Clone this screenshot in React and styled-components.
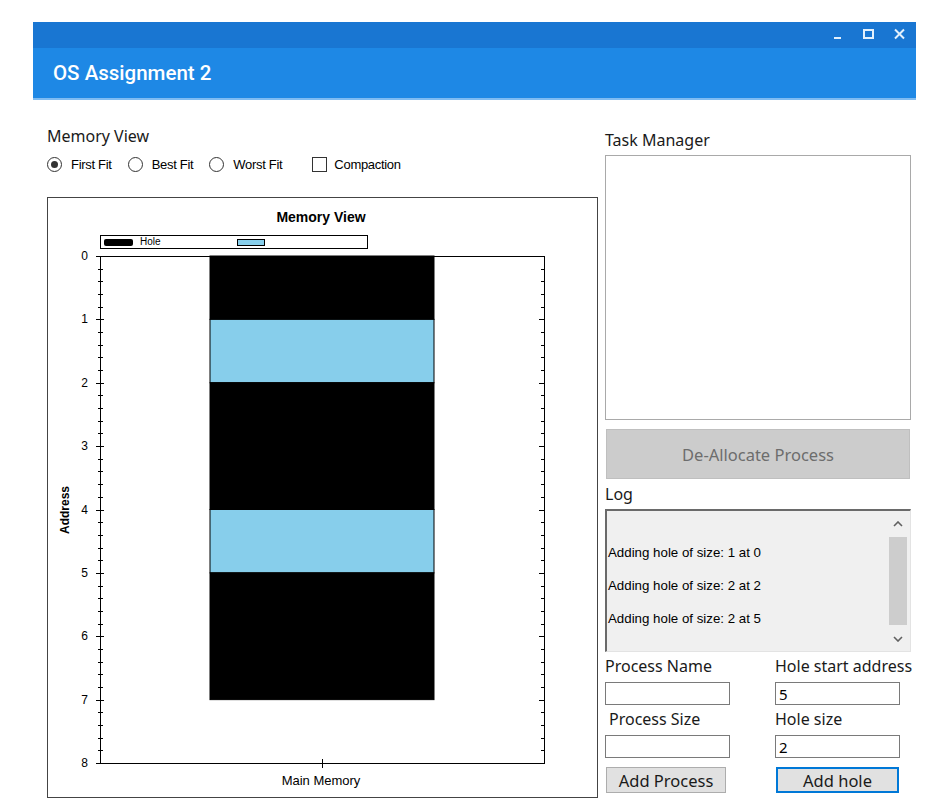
import React from 'react'
import styled, { createGlobalStyle } from 'styled-components'

const Global = createGlobalStyle`
  html, body {
    margin: 0;
    padding: 0;
    background: #ffffff;
  }
  * { box-sizing: border-box; }
`

const UI = '"Noto Sans", "Open Sans", sans-serif'
const CLASSIC = '"Liberation Sans", Arial, sans-serif'

// chart geometry (inside svg, origin at page 48,198)
const PL = 52
const PR = 496
const PT = 58
const PB = 565
const UNIT = (PB - PT) / 8
const BAR_X = 162
const BAR_W = 224

const segments = [
  { from: 0, to: 1, kind: 'process' },
  { from: 1, to: 2, kind: 'hole' },
  { from: 2, to: 4, kind: 'process' },
  { from: 4, to: 5, kind: 'hole' },
  { from: 5, to: 7, kind: 'process' },
]

const logLines = [
  'Adding hole of size: 1 at 0',
  'Adding hole of size: 2 at 2',
  'Adding hole of size: 2 at 5',
]

const App = () => {
  return (
    <>
      <Global />
      <Window>
        <TitleBar>
          <Controls>
            <svg width="72" height="16" viewBox="0 0 72 16">
              <rect x="0" y="10" width="7" height="2" fill="#e3f0fc" />
              <rect x="30" y="3" width="9" height="8" fill="none" stroke="#e3f0fc" strokeWidth="2" />
              <path d="M61 2.5 L70 11.5 M70 2.5 L61 11.5" stroke="#e3f0fc" strokeWidth="2" />
            </svg>
          </Controls>
          <TitleBand>OS Assignment 2</TitleBand>
        </TitleBar>

        <Body>
          <LeftColumn>
            <SectionLabel $top={26}>Memory View</SectionLabel>
            <OptionRow>
              <Option>
                <Radio $checked />
                First Fit
              </Option>
              <Option>
                <Radio />
                Best Fit
              </Option>
              <Option $gap={30}>
                <Radio />
                Worst Fit
              </Option>
              <Option>
                <Check />
                Compaction
              </Option>
            </OptionRow>

            <ChartPanel>
              <svg width="549" height="599" viewBox="0 0 549 599">
                <text x="273" y="24" textAnchor="middle" fontFamily={CLASSIC} fontWeight="bold" fontSize="14" fill="#000">
                  Memory View
                </text>

                {/* legend */}
                <rect x="52.5" y="37.5" width="267" height="13" fill="#fff" stroke="#000" />
                <rect x="56" y="41" width="29" height="7" rx="2" fill="#000" />
                <text x="92" y="47" fontFamily={CLASSIC} fontSize="10" fill="#000">Hole</text>
                <rect x="189.5" y="41.5" width="27" height="6" fill="#87ceeb" stroke="#000" />

                {/* bars */}
                {segments.map((s, i) => (
                  <rect
                    key={i}
                    x={BAR_X}
                    y={PT + s.from * UNIT}
                    width={BAR_W}
                    height={(s.to - s.from) * UNIT}
                    fill={s.kind === 'hole' ? '#87ceeb' : '#000'}
                    stroke="#000"
                    strokeWidth="1"
                  />
                ))}

                {/* frame */}
                <rect x={PL + 0.5} y={PT + 0.5} width={PR - PL} height={PB - PT} fill="none" stroke="#000" strokeWidth="1" />

                {/* y ticks */}
                {Array.from({ length: 41 }, (_, i) => {
                  const y = Math.round(PT + (i * UNIT) / 5) + 0.5
                  const major = i % 5 === 0
                  return (
                    <g key={i}>
                      <line x1={major ? PL - 4 : PL - 2} x2={major ? PL + 4 : PL + 3} y1={y} y2={y} stroke="#000" />
                      <line x1={major ? PR - 5 : PR - 3} x2={PR} y1={y} y2={y} stroke="#000" />
                    </g>
                  )
                })}
                {Array.from({ length: 9 }, (_, i) => (
                  <text key={i} x="40" y={PT + i * UNIT + 4} textAnchor="end" fontFamily={CLASSIC} fontSize="12" fill="#000">
                    {i}
                  </text>
                ))}

                {/* x tick */}
                <line x1="274.5" x2="274.5" y1={PB - 4} y2={PB + 5} stroke="#000" />
                <text x="273" y="587" textAnchor="middle" fontFamily={CLASSIC} fontSize="13" fill="#000">
                  Main Memory
                </text>

                <text
                  x="0"
                  y="0"
                  transform="translate(21 312) rotate(-90)"
                  textAnchor="middle"
                  fontFamily={CLASSIC}
                  fontWeight="bold"
                  fontSize="12"
                  fill="#000"
                >
                  Address
                </text>
              </svg>
            </ChartPanel>
          </LeftColumn>

          <RightColumn>
            <SectionLabel $top={30}>Task Manager</SectionLabel>
            <ListBox />
            <BigButton disabled>De-Allocate Process</BigButton>
            <SectionLabel $top={5}>Log</SectionLabel>
            <LogBox>
              <LogLines>
                {logLines.map((l) => (
                  <LogLine key={l}>{l}</LogLine>
                ))}
              </LogLines>
              <ScrollBar>
                <Arrow>
                  <svg width="10" height="6" viewBox="0 0 10 6">
                    <path d="M1 5 L5 1 L9 5" fill="none" stroke="#606060" strokeWidth="1.6" />
                  </svg>
                </Arrow>
                <Thumb />
                <Arrow>
                  <svg width="10" height="6" viewBox="0 0 10 6">
                    <path d="M1 1 L5 5 L9 1" fill="none" stroke="#606060" strokeWidth="1.6" />
                  </svg>
                </Arrow>
              </ScrollBar>
            </LogBox>

            <FormGrid>
              <Field>
                <FieldLabel>Process Name</FieldLabel>
                <TextBox defaultValue="" />
              </Field>
              <Field>
                <FieldLabel>Hole start address</FieldLabel>
                <TextBox defaultValue="5" />
              </Field>
              <Field>
                <FieldLabel $indent={4}>Process Size</FieldLabel>
                <TextBox defaultValue="" />
              </Field>
              <Field>
                <FieldLabel>Hole size</FieldLabel>
                <TextBox defaultValue="2" />
              </Field>
              <ActionButton>Add Process</ActionButton>
              <ActionButton $focused>Add hole</ActionButton>
            </FormGrid>
          </RightColumn>
        </Body>
      </Window>
    </>
  )
}

const Window = styled.div`
  margin: 22px 0 0 33px;
  width: 883px;
  height: 789px;
  background: #ffffff;
  overflow: hidden;
`

const TitleBar = styled.div`
  display: flex;
  flex-direction: column;
  border-bottom: 2px solid #7fbcf2;
`

const Controls = styled.div`
  height: 26px;
  background: #1976d2;
  display: flex;
  justify-content: flex-end;
  align-items: center;
  padding-right: 10px;
`

const TitleBand = styled.div`
  height: 50px;
  background: #1e88e5;
  color: #ffffff;
  font-family: Roboto, "Noto Sans", sans-serif;
  font-weight: 500;
  font-size: 20.5px;
  display: flex;
  align-items: center;
  padding-left: 20px;
`

const Body = styled.div`
  display: flex;
  gap: 7px;
  padding-left: 14px;
`

const LeftColumn = styled.div`
  width: 551px;
  display: flex;
  flex-direction: column;
`

const RightColumn = styled.div`
  width: 306px;
  display: flex;
  flex-direction: column;
`

const SectionLabel = styled.div`
  margin-top: ${(p) => p.$top}px;
  font-family: ${UI};
  font-size: 16px;
  line-height: 21px;
  color: #1a1a1a;
`

const OptionRow = styled.div`
  margin-top: 8px;
  display: flex;
  align-items: center;
  height: 18px;
`

const Option = styled.label`
  display: flex;
  align-items: center;
  gap: 9px;
  margin-right: ${(p) => p.$gap ?? 16}px;
  font-family: ${CLASSIC};
  font-size: 13px;
  letter-spacing: -0.3px;
  color: #000;
`

const Radio = styled.span`
  width: 15px;
  height: 15px;
  border-radius: 50%;
  border: 1px solid #333;
  background: #fff;
  display: inline-flex;
  align-items: center;
  justify-content: center;
  &::after {
    content: "";
    width: 7px;
    height: 7px;
    border-radius: 50%;
    background: ${(p) => (p.$checked ? '#333' : 'transparent')};
  }
`

const Check = styled.span`
  width: 15px;
  height: 15px;
  border: 1px solid #333;
  background: #fff;
  margin-right: -2px;
`

const ChartPanel = styled.div`
  margin-top: 24px;
  width: 551px;
  height: 601px;
  border: 1px solid #444;
  background: #fff;
  svg { display: block; }
`

const ListBox = styled.div`
  margin-top: 4px;
  width: 306px;
  height: 265px;
  border: 1px solid #a9a9a9;
  background: #fff;
`

const BigButton = styled.button`
  margin-top: 9px;
  margin-left: 1px;
  width: 304px;
  height: 50px;
  background: #cccccc;
  border: 1px solid #bfbfbf;
  color: #6d6d6d;
  font-family: ${UI};
  font-size: 16.5px;
  padding: 0;
`

const LogBox = styled.div`
  margin-top: 4px;
  width: 306px;
  height: 143px;
  display: flex;
  background: #f0f0f0;
  border-top: 2px solid #6a6a6a;
  border-left: 2px solid #6a6a6a;
  border-right: 1px solid #e3e3e3;
  border-bottom: 1px solid #e3e3e3;
`

const LogLines = styled.div`
  flex: 1;
  padding: 34px 0 0 1px;
  display: flex;
  flex-direction: column;
  gap: 17px;
`

const LogLine = styled.div`
  font-family: ${CLASSIC};
  font-size: 13.3px;
  line-height: 16px;
  color: #000;
`

const ScrollBar = styled.div`
  width: 20px;
  margin-right: 2px;
  display: flex;
  flex-direction: column;
  background: #f0f0f0;
`

const Arrow = styled.div`
  height: 25px;
  display: flex;
  align-items: center;
  justify-content: center;
`

const Thumb = styled.div`
  flex: 1;
  margin: 1px 1px;
  background: #cdcdcd;
`

const FormGrid = styled.div`
  margin-top: 4px;
  display: grid;
  grid-template-columns: 170px 136px;
  row-gap: 4px;
`

const Field = styled.div`
  display: flex;
  flex-direction: column;
  gap: 5px;
`

const FieldLabel = styled.div`
  padding-left: ${(p) => p.$indent ?? 0}px;
  font-family: ${UI};
  font-size: 16px;
  line-height: 21px;
  color: #1a1a1a;
  white-space: nowrap;
`

const TextBox = styled.input`
  width: 125px;
  height: 23px;
  border: 1px solid #7a7a7a;
  background: #fff;
  font-family: ${UI};
  font-size: 15px;
  padding: 0 3px;
  outline: none;
`

const ActionButton = styled.button`
  margin-top: 5px;
  margin-left: 1px;
  width: ${(p) => (p.$focused ? 123 : 120)}px;
  height: 26px;
  background: #e1e1e1;
  border: ${(p) => (p.$focused ? '2px solid #0078d7' : '1px solid #adadad')};
  font-family: ${UI};
  font-size: 16.5px;
  color: #1a1a1a;
  padding: 0;
`

export default App
